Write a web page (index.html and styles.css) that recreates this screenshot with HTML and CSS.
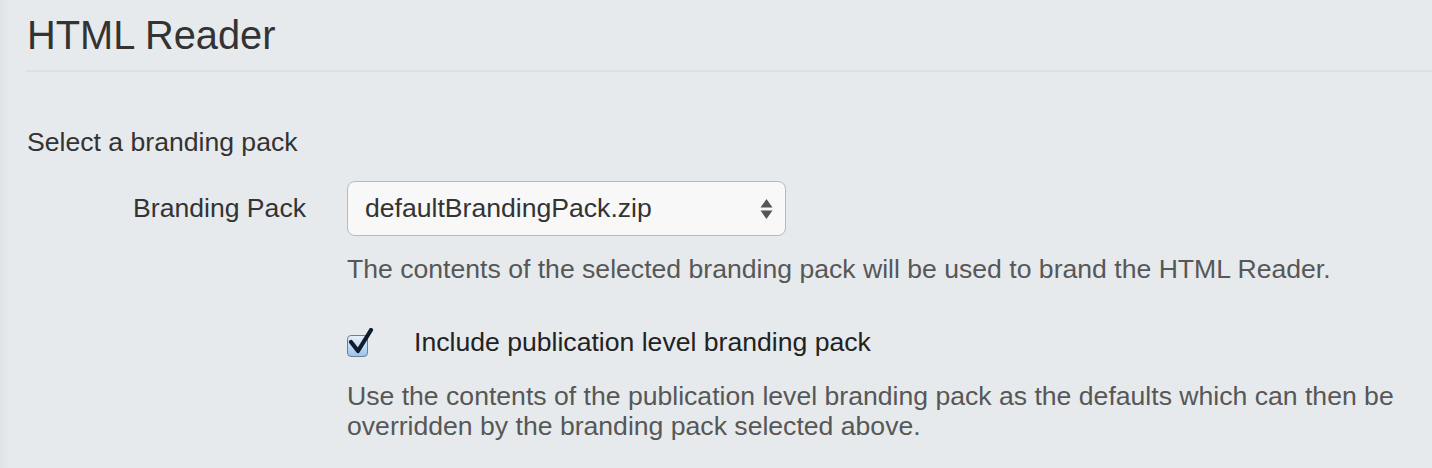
FILE: index.html
```html
<!DOCTYPE html>
<html>
<head>
<meta charset="utf-8">
<link rel="stylesheet" href="styles.css">
</head>
<body>
<div class="page">
  <h1 class="title">HTML Reader</h1>
  <div class="section">
    <div class="section-title">Select a branding pack</div>
    <div class="form-row">
      <label class="row-label">Branding Pack</label>
      <div class="controls">
        <div class="select">
          <span class="select-text">defaultBrandingPack.zip</span>
          <svg class="arrows" width="13" height="22" viewBox="0 0 13 22"><path d="M6.5 1 L12.5 9.5 L0.5 9.5 Z" fill="#555"/><path d="M6.5 21 L12.5 12.5 L0.5 12.5 Z" fill="#555"/></svg>
        </div>
        <p class="help">The contents of the selected branding pack will be used to brand the HTML Reader.</p>
        <div class="check-row">
          <span class="checkbox">
            <svg width="30" height="30" viewBox="0 0 30 30" class="tick"><path d="M4 14 L11 23 L24 2" fill="none" stroke="#0f1c2e" stroke-width="4.2" stroke-linecap="round" stroke-linejoin="round"/></svg>
          </span>
          <span class="check-label">Include publication level branding pack</span>
        </div>
        <p class="help help-wide">Use the contents of the publication level branding pack as the defaults which can then be overridden by the branding pack selected above.</p>
      </div>
    </div>
  </div>
</div>
</body>
</html>
```
FILE: styles.css
```css
html, body {
  margin: 0;
  padding: 0;
}
body {
  background: #e6eaed;
  font-family: "Liberation Sans", Arial, sans-serif;
  color: #333;
  width: 1432px;
  height: 468px;
  overflow: hidden;
}
.page {
  background: linear-gradient(to right, #dfe4e7 0px, #e6eaed 10px);
  height: 468px;
  padding-left: 26px;
}
.title {
  margin: 0;
  padding-top: 12px;
  font-size: 39.8px;
  font-weight: normal;
  line-height: 46px;
  color: #333;
  padding-left: 1px;
  padding-bottom: 12px;
  border-bottom: 2px solid #dde1e3;
}
.section {
  padding-top: 55px;
}
.section-title {
  font-size: 26.6px;
  line-height: 30px;
  padding-left: 1px;
}
.form-row {
  display: flex;
  margin-top: 24px;
}
.row-label {
  width: 280px;
  text-align: right;
  font-size: 26.6px;
  line-height: 30px;
  padding-top: 12px;
}
.controls {
  margin-left: 41px;
  display: flex;
  flex-direction: column;
}
.select {
  border: 1px solid #b7b9bb;
  border-radius: 8px;
  background: #f8f8f8;
  display: flex;
  align-items: center;
  justify-content: space-between;
  padding: 0 12px 0 17px;
  box-sizing: border-box;
  width: 439px;
  height: 55px;
}
.select-text {
  font-size: 26.6px;
  color: #333;
}
.arrows {
  display: block;
}
.help {
  margin: 0;
  font-size: 26.6px;
  line-height: 30px;
  color: #575757;
}
.controls > .help:first-of-type {
  margin-top: 18px;
}
.check-row {
  display: flex;
  align-items: center;
  margin-top: 43px;
  height: 30px;
}
.checkbox {
  position: relative;
  width: 19px;
  height: 20px;
  border: 1px solid #6f7f92;
  border-radius: 4px;
  background: linear-gradient(to bottom, #e4f0fb 0%, #c3dcf5 50%, #98c4ee 100%);
  margin-top: 7px;
}
.tick {
  position: absolute;
  left: -1px;
  top: -8px;
}
.check-label {
  margin-left: 46px;
  font-size: 26.6px;
  line-height: 30px;
  color: #222;
}
.help-wide {
  margin-top: 24px;
  width: 1070px;
}
```
